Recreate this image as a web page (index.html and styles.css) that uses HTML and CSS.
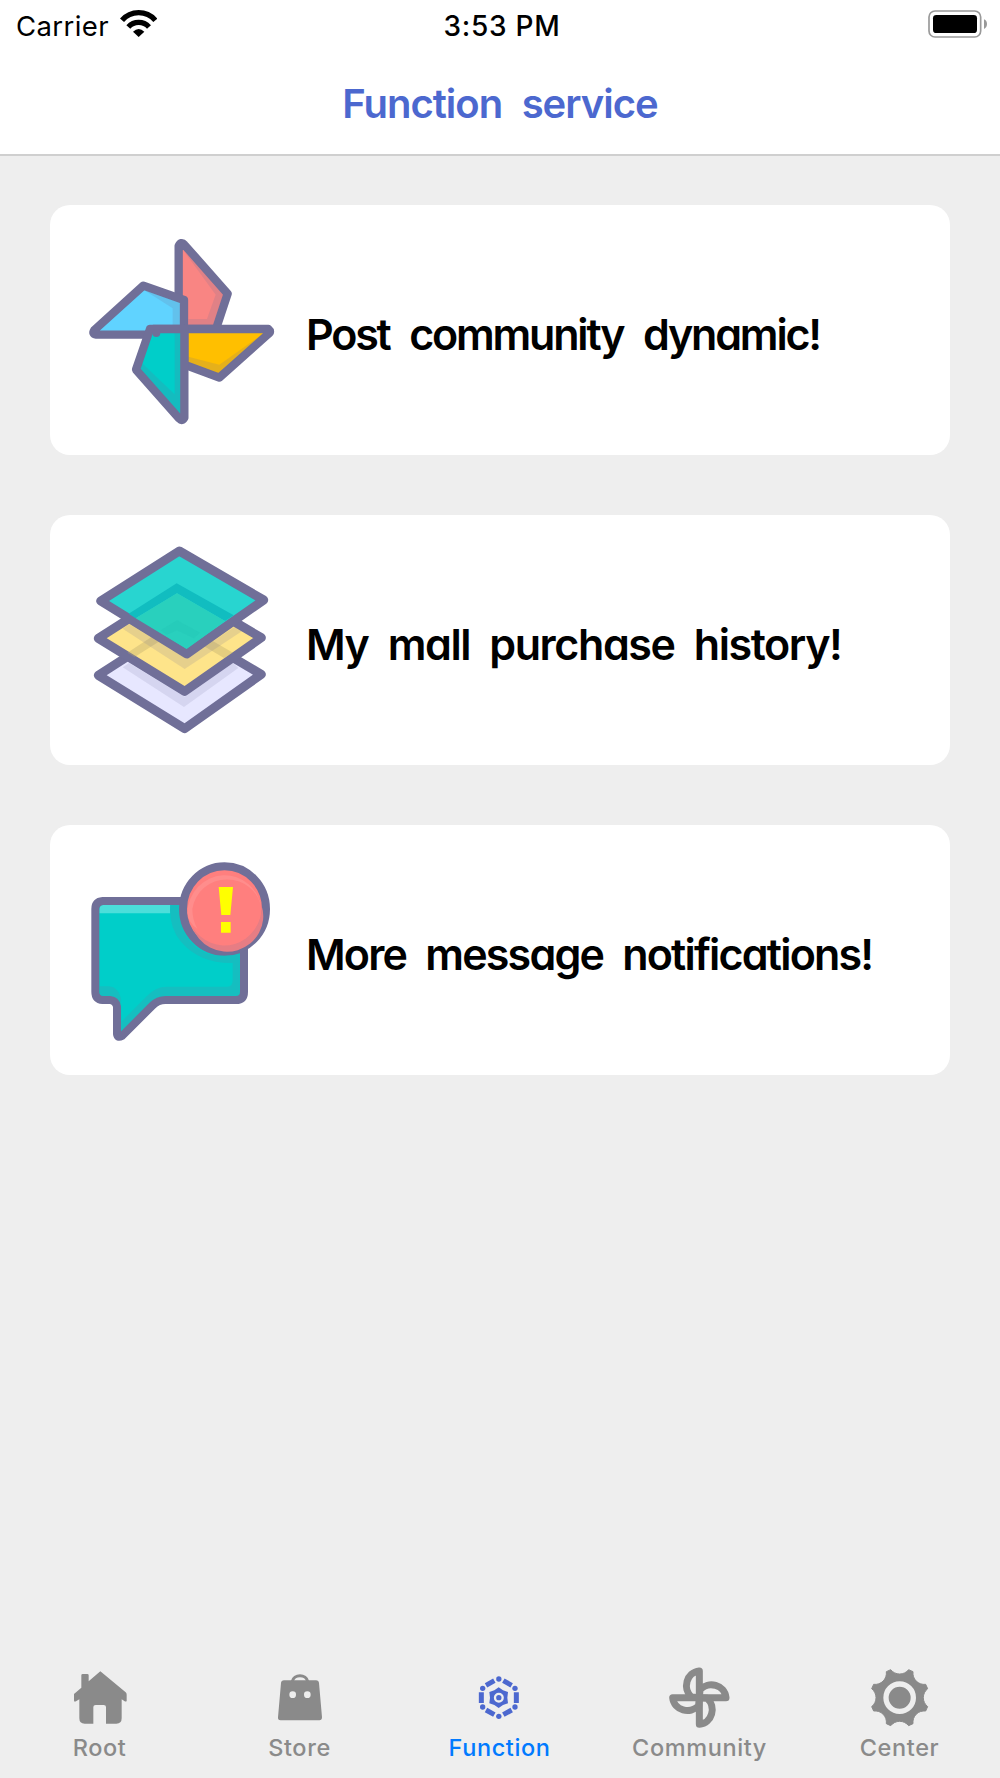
FILE: index.html
```html
<!DOCTYPE html>
<html lang="en">
<head>
    <meta charset="UTF-8">
    <meta name="viewport" content="width=device-width, initial-scale=1.0">
    <title>Function service</title>
    <link rel="stylesheet" href="styles.css">
</head>
<body>
    <header class="header">
        <div class="status-bar">
            <div class="carrier">
                <span>Carrier</span>
                <svg class="wifi" viewBox="360 30 111 81">
                    <path d="M366 61A66 66 0 0 1 466 61" fill="none" stroke="#000" stroke-width="16"/>
                    <path d="M385 81A42 42 0 0 1 447 81" fill="none" stroke="#000" stroke-width="16"/>
                    <path d="M399 95Q416 79 433 95L416 111Z"/>
                </svg>
            </div>
            <div class="time">3:53 PM</div>
            <svg class="battery" viewBox="1284 30 180 84">
                <rect x="1287" y="33" width="155" height="78" rx="18" fill="none" stroke="#999" stroke-width="5"/>
                <rect x="1299" y="45" width="132" height="54" rx="10"/>
                <path d="M1452 58Q1461 62 1461 72T1452 87Z" fill="#999"/>
            </svg>
        </div>
        <h1 class="title">Function service</h1>
    </header>

    <main class="cards">
        <div class="card">
            <svg class="card-icon" viewBox="120 30 600 750">
                <g stroke="#706f98" stroke-width="25" stroke-linejoin="round" stroke-linecap="round">
                    <path d="M416 402V153Q424 138 433 149L563 296L528 402Z" fill="#f98583"/>
                    <path d="M432 402V315L310 272L163 405Q155 417 169 419H348L340 402Z" fill="#60d3ff"/>
                    <path d="M433 402H685Q695 410 685 417L538 548L433 509Z" fill="#ffbf00"/>
                    <path d="M330 402H433V668Q427 680 418 671L288 524Z" fill="#00cec9"/>
                </g>
                <circle cx="349" cy="414" r="12" fill="#706f98"/>
                <g fill="#706f98" fill-opacity=".18">
                    <path d="M428 163L550 297L519 390H445V372H501L527 299Z"/>
                    <path d="M312 285L420 323V390H398V340Z"/>
                    <path d="M445 485L538 509L672 414L538 536L445 503Z"/>
                    <path d="M420 414H404V598L306 504L300 524L420 658Z"/>
                </g>
            </svg>
            <span class="card-text post">Post community dynamic!</span>
        </div>
        <div class="card">
            <svg class="card-icon" viewBox="120 30 600 750">
                <g stroke="#706f98" stroke-width="27" stroke-linejoin="round">
                    <path d="M411 359L664 508L434 671L175 511Z" fill="#e7e7ff"/>
                    <path d="M248 487L267 474L434 575L579 474L595 489L432 606Z" fill="#706f98" fill-opacity=".15" stroke="none"/>
                    <path d="M411 249L664 398L434 559L175 400Z" fill="#fee48a"/>
                    <path d="M262 443L411 346L579 443L552 459L411 376L284 456Z" fill="#b8a66a" fill-opacity=".35" stroke="none"/>
                    <path d="M248 371L267 357L440 461L584 365L608 377L434 492Z" fill="#706f98" fill-opacity=".17" stroke="none"/>
                    <path d="M418 138L671 285L440 447L182 288Z" fill="#28d5d0"/>
                </g>
                <path d="M266 326L410 235L581 331L555 348L411 265L287 340Z" fill="#11bdc0"/>
                <path d="M287 340L411 265L555 348L440 432Z" fill="#29d0bd"/>
                <path d="M362 376L411 346L480 383L462 400L411 376L380 389Z" fill="#24c7b8" fill-opacity=".5"/>
            </svg>
            <span class="card-text mall">My mall purchase history!</span>
        </div>
        <div class="card">
            <svg class="card-icon" viewBox="120 30 600 750">
                <path d="M188 258H588Q612 258 612 282V530Q612 555 588 555H376Q354 555 337 572L246 663Q232 670 231 657V575Q228 557 210 555H188Q166 553 166 530V282Q166 260 188 258Z" fill="#00cec9"/>
                <path d="M178 295V282Q180 270 188 270H391V295Z" fill="#4bdeda"/>
                <path d="M391 270H420A130 130 0 0 0 600 412V543H376Q350 543 328 565L243 650V575Q240 550 210 543H188Q178 542 178 514H205Q235 515 243 550L244 620L320 544Q346 515 380 515H562Q578 515 578 495V444Q480 446 423 380Q385 335 391 270Z" fill="#15bec0"/>
                <path d="M188 258H588Q612 258 612 282V530Q612 555 588 555H376Q354 555 337 572L246 663Q232 670 231 657V575Q228 557 210 555H188Q166 553 166 530V282Q166 260 188 258Z" fill="none" stroke="#706f98" stroke-width="24"/>
                <ellipse cx="553.500" cy="282" rx="124.500" ry="128.500" fill="#ff7f7e" stroke="#706f98" stroke-width="24"/>
                <path d="M442 293A112 116 0 0 1 665 282A105 103 0 0 0 457 282Q457 315 472 341Q446 325 442 293Z" fill="#ff8d8c"/>
                <path d="M457 335A112 116 0 0 0 665 272A105 103 0 0 1 457 335Z" fill="#e67d84"/>
                <path d="M536 216H579L571 300H544ZM543 321H572V353H543Z" fill="#ff0"/>
            </svg>
            <span class="card-text more">More message notifications!</span>
        </div>
    </main>

    <nav class="tab-bar">
        <a class="tab">
            <svg class="tab-icon" viewBox="84 48 192 192">
                <path d="M181 64L257 127Q260 130 260 134V153Q258 156 254 154L245 148V205Q245 221 229 221H198V171Q198 165 191 165H167Q160 165 160 171V221H134Q118 221 118 205V148L108 154Q102 157 102 151V132L124 113V76Q124 72 128 72H142Q146 72 146 76V94Z"/>
            </svg>
            <span>Root</span>
        </a>
        <a class="tab">
            <svg class="tab-icon" viewBox="684 48 192 192">
                <path d="M757 94A23.500 21 0 0 1 803 94" fill="none" stroke="#8a8a8a" stroke-width="9"/>
                <path d="M732 91H828Q836 91 837 99L846 202Q846 211 838 211H722Q713 211 714 202L723 99Q724 91 732 91Z"/>
                <circle cx="758" cy="134" r="10" fill="#eee"/>
                <circle cx="802" cy="134" r="10" fill="#eee"/>
            </svg>
            <span>Store</span>
        </a>
        <a class="tab active">
            <svg class="tab-icon" viewBox="144 48 192 192">
                <g fill="none" stroke="#4c68cf" stroke-width="15">
                    <path d="M289 127V159M184 127V159M250 92L275 106M223 92L198 106M250 194L275 180M223 194L198 180"/>
                </g>
                <g>
                    <circle cx="236.500" cy="87" r="8"/>
                    <circle cx="285" cy="115" r="8"/>
                    <circle cx="285" cy="171" r="8"/>
                    <circle cx="236.500" cy="199" r="8"/>
                    <circle cx="188" cy="171" r="8"/>
                    <circle cx="188" cy="115" r="8"/>
                </g>
                <path d="M236 112L249 121L264 126L262 143L264 160L249 165L236 174L223 165L208 160L210 143L208 126L223 121Z"/>
                <circle cx="236.500" cy="143" r="11.500" fill="none" stroke="#eee" stroke-width="7"/>
            </svg>
            <span>Function</span>
        </a>
        <a class="tab">
            <svg class="tab-icon" viewBox="144 48 192 192">
                <g fill="none" stroke="#8a8a8a" stroke-width="21" stroke-linejoin="round">
                    <path id="blade" d="M238 143V63C199 67 187 116 214 141Z"/>
                    <use href="#blade" transform="rotate(90 238 143)"/>
                    <use href="#blade" transform="rotate(180 238 143)"/>
                    <use href="#blade" transform="rotate(270 238 143)"/>
                </g>
            </svg>
            <span>Community</span>
        </a>
        <a class="tab">
            <svg class="tab-icon" viewBox="144 48 192 192">
                <g transform="translate(239 143)">
                    <path stroke="#8a8a8a" stroke-width="3" stroke-linejoin="round" d="M-26.800 -84A34 34 0 0 0 26.800 -84L40 -78A34 34 0 0 0 78 -40L84 -26.800A34 34 0 0 0 84 26.800L78 40A34 34 0 0 0 40 78L26.800 84A34 34 0 0 0 -26.800 84L-40 78A34 34 0 0 0 -78 40L-84 26.800A34 34 0 0 0 -84 -26.800L-78 -40A34 34 0 0 0 -40 -78Z"/>
                    <circle r="41" fill="none" stroke="#eee" stroke-width="16"/>
                </g>
            </svg>
            <span>Center</span>
        </a>
    </nav>
</body>
</html>
```
FILE: styles.css
```css
/* General Styles */
* {
    box-sizing: border-box;
}

body {
    margin: 0;
    min-height: 1778px;
    display: flex;
    flex-direction: column;
    background-color: #eee;
    color: #000;
    font-family: 'Inter', sans-serif;
}

svg {
    display: block;
    flex-shrink: 0;
}

/* Header */
.header {
    height: 156px;
    background-color: white;
    border-bottom: 2px solid #cfcfcf;
}

.status-bar {
    display: grid;
    grid-template-columns: 1fr auto 1fr;
    align-items: center;
    height: 51px;
    padding: 0 12px 0 16px;
    font-size: 27.5px;
}

.carrier {
    display: flex;
    align-items: center;
    gap: 11px;
    letter-spacing: 0.4px;
}

.wifi {
    width: 37px;
    height: 27px;
    margin-top: -4px;
}

.time {
    font-size: 28px;
    font-weight: 500;
    letter-spacing: 0.7px;
}

.battery {
    width: 60px;
    height: 28px;
    margin-top: -3px;
    justify-self: end;
}

.title {
    margin: 0;
    color: #4c68cf;
    font-size: 40px;
    font-weight: 600;
    line-height: 106px;
    letter-spacing: -1px;
    word-spacing: 10.4px;
    text-align: center;
    font-feature-settings: 'cv11';
}

/* Cards */
.cards {
    flex: 1;
    display: flex;
    flex-direction: column;
    gap: 60px;
    padding: 49px 50px;
}

.card {
    display: flex;
    align-items: center;
    gap: 26px;
    height: 250px;
    padding-left: 30px;
    background-color: white;
    border-radius: 20px;
}

.card-icon {
    width: 200px;
    height: 250px;
}

.card-text {
    padding-top: 7px;
    font-size: 43px;
    font-weight: 600;
    white-space: nowrap;
    font-feature-settings: 'cv11';
}

.post {
    letter-spacing: -2.2px;
    word-spacing: 11px;
}

.mall {
    letter-spacing: -1.4px;
    word-spacing: 9.7px;
}

.more {
    letter-spacing: -1.8px;
    word-spacing: 10px;
}

/* Tab Bar */
.tab-bar {
    display: grid;
    grid-template-columns: repeat(5, 1fr);
    height: 120px;
    padding-top: 8px;
}

.tab {
    display: flex;
    flex-direction: column;
    align-items: center;
    color: #8a8a8a;
    fill: #8a8a8a;
    font-size: 23.5px;
    font-weight: 500;
    letter-spacing: 0.6px;
    line-height: 36px;
}

.tab span {
    margin-right: 1px;
}

.tab-icon {
    width: 64px;
    height: 64px;
}

.active {
    color: #007aff;
    fill: #4c68cf;
}
```
